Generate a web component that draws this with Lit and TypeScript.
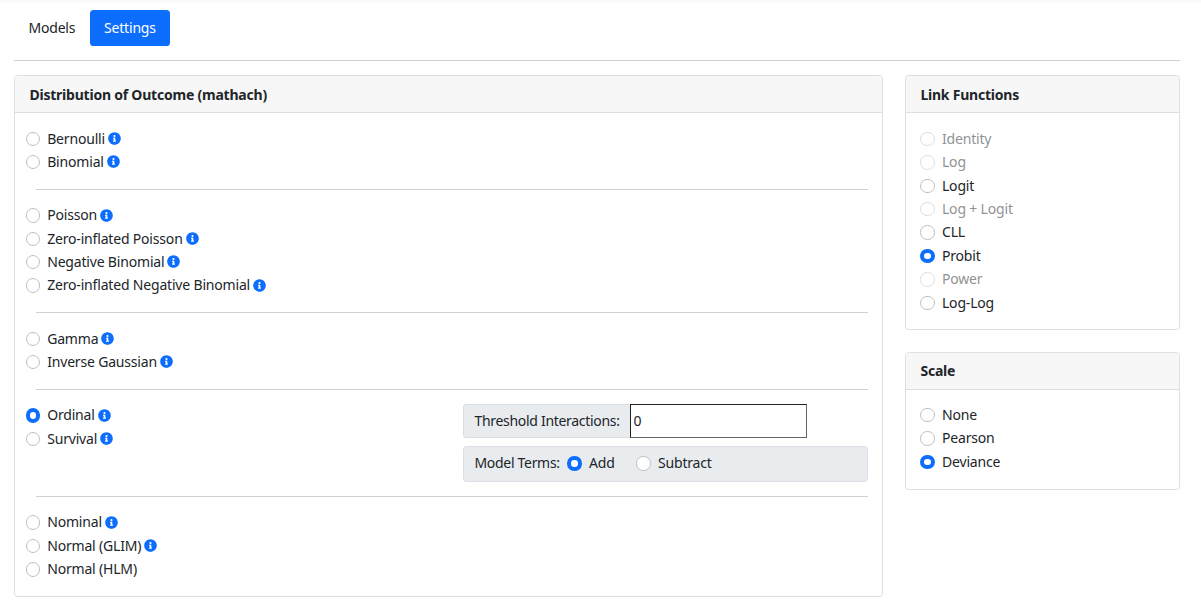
import { LitElement, html, css, svg } from "lit";
import { customElement } from "lit/decorators.js";

const infoIcon = html`<svg class="info" viewBox="0 0 512 512" aria-hidden="true">${svg`<path fill="currentColor" d="M256 8C119.043 8 8 119.083 8 256c0 136.997 111.043 248 248 248s248-111.003 248-248C504 119.083 392.957 8 256 8zm0 110c23.196 0 42 18.804 42 42s-18.804 42-42 42-42-18.804-42-42 18.804-42 42-42zm56 254c0 6.627-5.373 12-12 12h-88c-6.627 0-12-5.373-12-12v-24c0-6.627 5.373-12 12-12h12v-64h-12c-6.627 0-12-5.373-12-12v-24c0-6.627 5.373-12 12-12h64c6.627 0 12 5.373 12 12v100h12c6.627 0 12 5.373 12 12v24z"/>`}</svg>`;

type Opt = { label: string; info?: boolean; checked?: boolean; disabled?: boolean };

const radio = (name: string, o: Opt) => html`
  <label class="check ${o.disabled ? "disabled" : ""}">
    <input type="radio" name=${name} ?checked=${o.checked} ?disabled=${o.disabled} />
    <span>${o.label}</span>${o.info ? infoIcon : ""}
  </label>`;

const i = (label: string, checked = false): Opt => ({ label, info: true, checked });

@customElement("app-root")
export class AppRoot extends LitElement {
  static styles = css`
    :host {
      display: block;
      width: 1201px;
      height: 616px;
      overflow: hidden;
      background: #fff;
      color: #212529;
      font-family: "Noto Sans", "Open Sans", sans-serif;
      font-size: 14px;
      letter-spacing: -0.18px;
      line-height: 21.6px;
      box-sizing: border-box;
      padding: 10px 21px 0 14px;
      box-shadow: inset 0 5px 4px -4px rgba(0, 0, 0, 0.05);
    }
    * { box-sizing: border-box; }
    .nav { display: flex; height: 36px; }
    .pill {
      padding: 7.2px 14px;
      border-radius: 3.6px;
      height: 36px;
      color: #212529;
    }
    .pill.models { width: 76px; padding-left: 14.4px; }
    .pill.active { width: 80px; background: #0d6efd; color: #fff; }
    .rule { border: 0; border-top: 1px solid #cfcfcf; margin: 0; }
    .top-rule { margin: 14px 0; }
    .columns { display: grid; grid-template-columns: 869px 275px; column-gap: 22px; }
    .side { display: flex; flex-direction: column; gap: 22px; }
    .card {
      border: 1px solid #dfdfdf;
      border-radius: 3.6px;
      background: #fff;
    }
    .card-head {
      height: 37px;
      padding: 8px 14.4px 0;
      font-weight: 700;
      letter-spacing: -0.22px;
      background: #f7f7f7;
      border-bottom: 1px solid #dfdfdf;
      border-radius: 3px 3px 0 0;
    }
    .card-head.scale-head { padding-top: 7px; }
    .main-body { padding: 14.7px 14.4px 0 10.6px; height: 483.4px; }
    .side-body { padding: 14.8px 14.4px 0; }
    .side-body.link { height: 216px; }
    .side-body.scale { height: 99px; padding-top: 14px; }
    .group { display: flow-root; }
    .check {
      display: flex;
      align-items: flex-start;
      height: 21.6px;
      margin-bottom: 1.8px;
    }
    .check input, .terms input {
      appearance: none;
      -webkit-appearance: none;
      width: 14.4px;
      height: 14.4px;
      margin: 4px 7.2px 0 0;
      flex: none;
      border: 1px solid #bfbfbf;
      border-radius: 50%;
      background: #fff;
    }
    input:checked {
      border: 4.3px solid #0d6efd !important;
    }
    .disabled { opacity: 0.5; }
    .info { width: 13px; height: 13px; margin: 4.4px 0 0 3px; color: #0d6efd; flex: none; }
    .group-rule { margin: 14.4px 0 14.4px 10.8px; }
    .ordinal { display: flex; justify-content: space-between; height: 77.4px; }
    .ordinal .form { width: 405px; display: flex; flex-direction: column; gap: 7.6px; }
    .addon {
      background: #e9ecef;
      border: 1px solid #dadde1;
      border-radius: 3.6px;
      letter-spacing: -0.3px;
    }
    .threshold { display: flex; height: 34px; width: 344px; }
    .threshold .addon {
      width: 167px;
      padding: 5.2px 10.8px;
      border-radius: 3.6px 0 0 3.6px;
      border-right: 0;
      white-space: nowrap;
    }
    .threshold input {
      flex: 1;
      min-width: 0;
      border: 1px solid;
      border-color: #222 #666 #666 #222;
      border-radius: 0;
      padding: 0 3px;
      font: inherit;
      letter-spacing: inherit;
      color: #212529;
      outline: none;
    }
    .terms { display: flex; align-items: center; height: 36px; padding: 0 10.8px 1px; }
    .terms label { display: flex; align-items: flex-start; height: 21.6px; letter-spacing: -0.18px; }
    .terms .lead { width: 93px; flex: none; }
    .terms .add { width: 69px; flex: none; }
  `;

  render() {
    const groups: Opt[][] = [
      [i("Bernoulli"), i("Binomial")],
      [i("Poisson"), i("Zero-inflated Poisson"), i("Negative Binomial"), i("Zero-inflated Negative Binomial")],
      [i("Gamma"), i("Inverse Gaussian")],
    ];
    const link: Opt[] = [
      { label: "Identity", disabled: true },
      { label: "Log", disabled: true },
      { label: "Logit" },
      { label: "Log + Logit", disabled: true },
      { label: "CLL" },
      { label: "Probit", checked: true },
      { label: "Power", disabled: true },
      { label: "Log-Log" },
    ];
    const scale: Opt[] = [{ label: "None" }, { label: "Pearson" }, { label: "Deviance", checked: true }];
    return html`
      <nav class="nav">
        <div class="pill models">Models</div>
        <div class="pill active">Settings</div>
      </nav>
      <hr class="rule top-rule" />
      <div class="columns">
        <section class="card">
          <div class="card-head">Distribution of Outcome (mathach)</div>
          <div class="main-body">
            ${groups.map(
              (g) => html`
                <div class="group">${g.map((o) => radio("dist", o))}</div>
                <hr class="rule group-rule" />
              `
            )}
            <div class="ordinal">
              <div>${radio("dist", i("Ordinal", true))}${radio("dist", i("Survival"))}</div>
              <div class="form">
                <div class="threshold">
                  <div class="addon">Threshold Interactions:</div>
                  <input type="text" value="0" />
                </div>
                <div class="addon terms">
                  <span class="lead">Model Terms:</span>
                  <label class="add"><input type="radio" name="terms" checked /><span>Add</span></label>
                  <label><input type="radio" name="terms" /><span>Subtract</span></label>
                </div>
              </div>
            </div>
            <hr class="rule group-rule" />
            <div class="group">
              ${radio("dist", i("Nominal"))}${radio("dist", i("Normal (GLIM)"))}${radio("dist", { label: "Normal (HLM)" })}
            </div>
          </div>
        </section>
        <div class="side">
          <section class="card">
            <div class="card-head">Link Functions</div>
            <div class="side-body link">${link.map((o) => radio("link", o))}</div>
          </section>
          <section class="card">
            <div class="card-head scale-head">Scale</div>
            <div class="side-body scale">${scale.map((o) => radio("scale", o))}</div>
          </section>
        </div>
      </div>
    `;
  }
}
